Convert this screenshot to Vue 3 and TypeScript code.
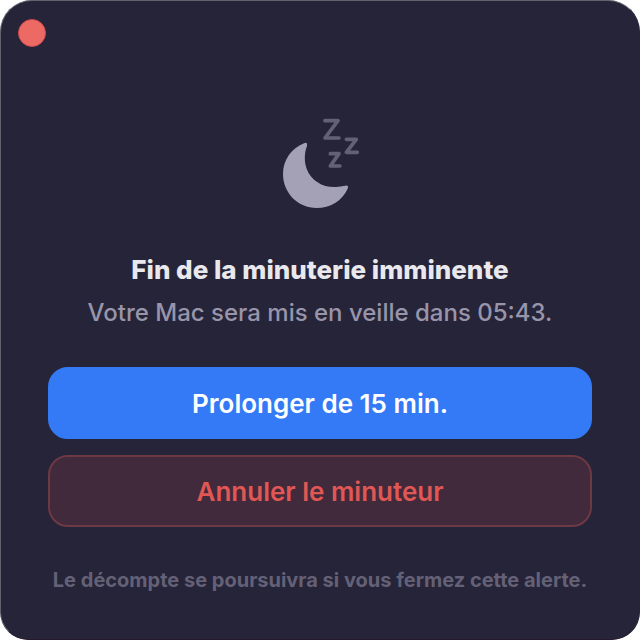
<script setup lang="ts">
import { computed, ref } from 'vue'

const open = ref(true)
const remaining = ref(343)

const countdown = computed(() => {
  const minutes = String(Math.floor(remaining.value / 60)).padStart(2, '0')
  const seconds = String(remaining.value % 60).padStart(2, '0')
  return `${minutes}:${seconds}`
})

function extend(): void {
  remaining.value += 15 * 60
}

function dismiss(): void {
  open.value = false
}
</script>

<template>
  <main
    v-if="open"
    class="alert"
    role="alertdialog"
    aria-labelledby="alert-title"
    aria-describedby="alert-message"
  >
    <header class="titlebar">
      <button class="close" type="button" aria-label="Fermer" @click="dismiss"></button>
    </header>

    <svg class="moon" viewBox="57 48 246 282" aria-hidden="true">
      <path
        class="crescent"
        d="M132 130 Q143 125 141 138 C133 158 132 184 140 206 C153 243 190 263 228 261 Q241 260 256 257 Q267 255 263 266 C247 302 210 324 170 324 C114 324 69 279 69 222 C69 180 94 146 132 130Z"
      />
      <path class="zed" d="M195 62H234L195 114H237" />
      <path class="zed" d="M259 118H289L259 157H292" />
      <path class="zed" d="M211 161H237L211 198H240" />
    </svg>

    <h1 id="alert-title" class="title">Fin de la minuterie imminente</h1>
    <p id="alert-message" class="message">Votre Mac sera mis en veille dans {{ countdown }}.</p>

    <div class="actions">
      <button class="action primary" type="button" @click="extend">Prolonger de 15 min.</button>
      <button class="action danger" type="button" @click="dismiss">Annuler le minuteur</button>
    </div>

    <p class="note">Le décompte se poursuivra si vous fermez cette alerte.</p>
  </main>
</template>

<style>
body {
  margin: 0;
  background: #ffffff;
}
</style>

<style scoped>
.alert {
  box-sizing: border-box;
  min-height: 100vh;
  padding: 0 47px 40px;
  display: flex;
  flex-direction: column;
  align-items: center;
  border: 1px solid #62616d;
  border-right-color: #262439;
  border-bottom-color: #28182c;
  border-radius: 32px 32px 28px 28px;
  background: #262439;
  font-family: Inter, "Liberation Sans", sans-serif;
  text-align: center;
}

.titlebar {
  align-self: stretch;
  display: flex;
  height: 46px;
  margin: 0 -30px;
  align-items: flex-end;
}

.close {
  box-sizing: border-box;
  width: 28px;
  height: 28px;
  padding: 0;
  border: 1px solid #d04a4c;
  border-radius: 50%;
  background: #ed6a64;
}

.moon {
  width: 82px;
  height: 94px;
  margin-top: 69px;
}

.crescent {
  fill: #a4a0b5;
}

.zed {
  fill: none;
  stroke: #646177;
  stroke-width: 11;
  stroke-linecap: round;
  stroke-linejoin: round;
}

.title {
  margin: 40px 0 0;
  color: #e9e8ed;
  font-size: 26px;
  font-weight: 800;
  line-height: 40px;
}

.message {
  margin: 3px 0 0;
  color: #9895aa;
  font-size: 24px;
  font-weight: 500;
  line-height: 40px;
}

.actions {
  align-self: stretch;
  display: flex;
  flex-direction: column;
  gap: 16px;
  margin-top: 34px;
}

.action {
  box-sizing: border-box;
  height: 72px;
  padding: 2px 6px 0;
  border: 2px solid transparent;
  border-radius: 20px;
  font-family: inherit;
  font-size: 26px;
  font-weight: 600;
  line-height: 32px;
}

.primary {
  border-color: #347af6;
  background: #347af6;
  color: #ffffff;
}

.danger {
  border-color: #6e3844;
  background: #402a3b;
  color: #e15754;
}

.note {
  margin: 41px 0 0;
  color: #646177;
  font-size: 20px;
  font-weight: 700;
  line-height: 24px;
}
</style>
